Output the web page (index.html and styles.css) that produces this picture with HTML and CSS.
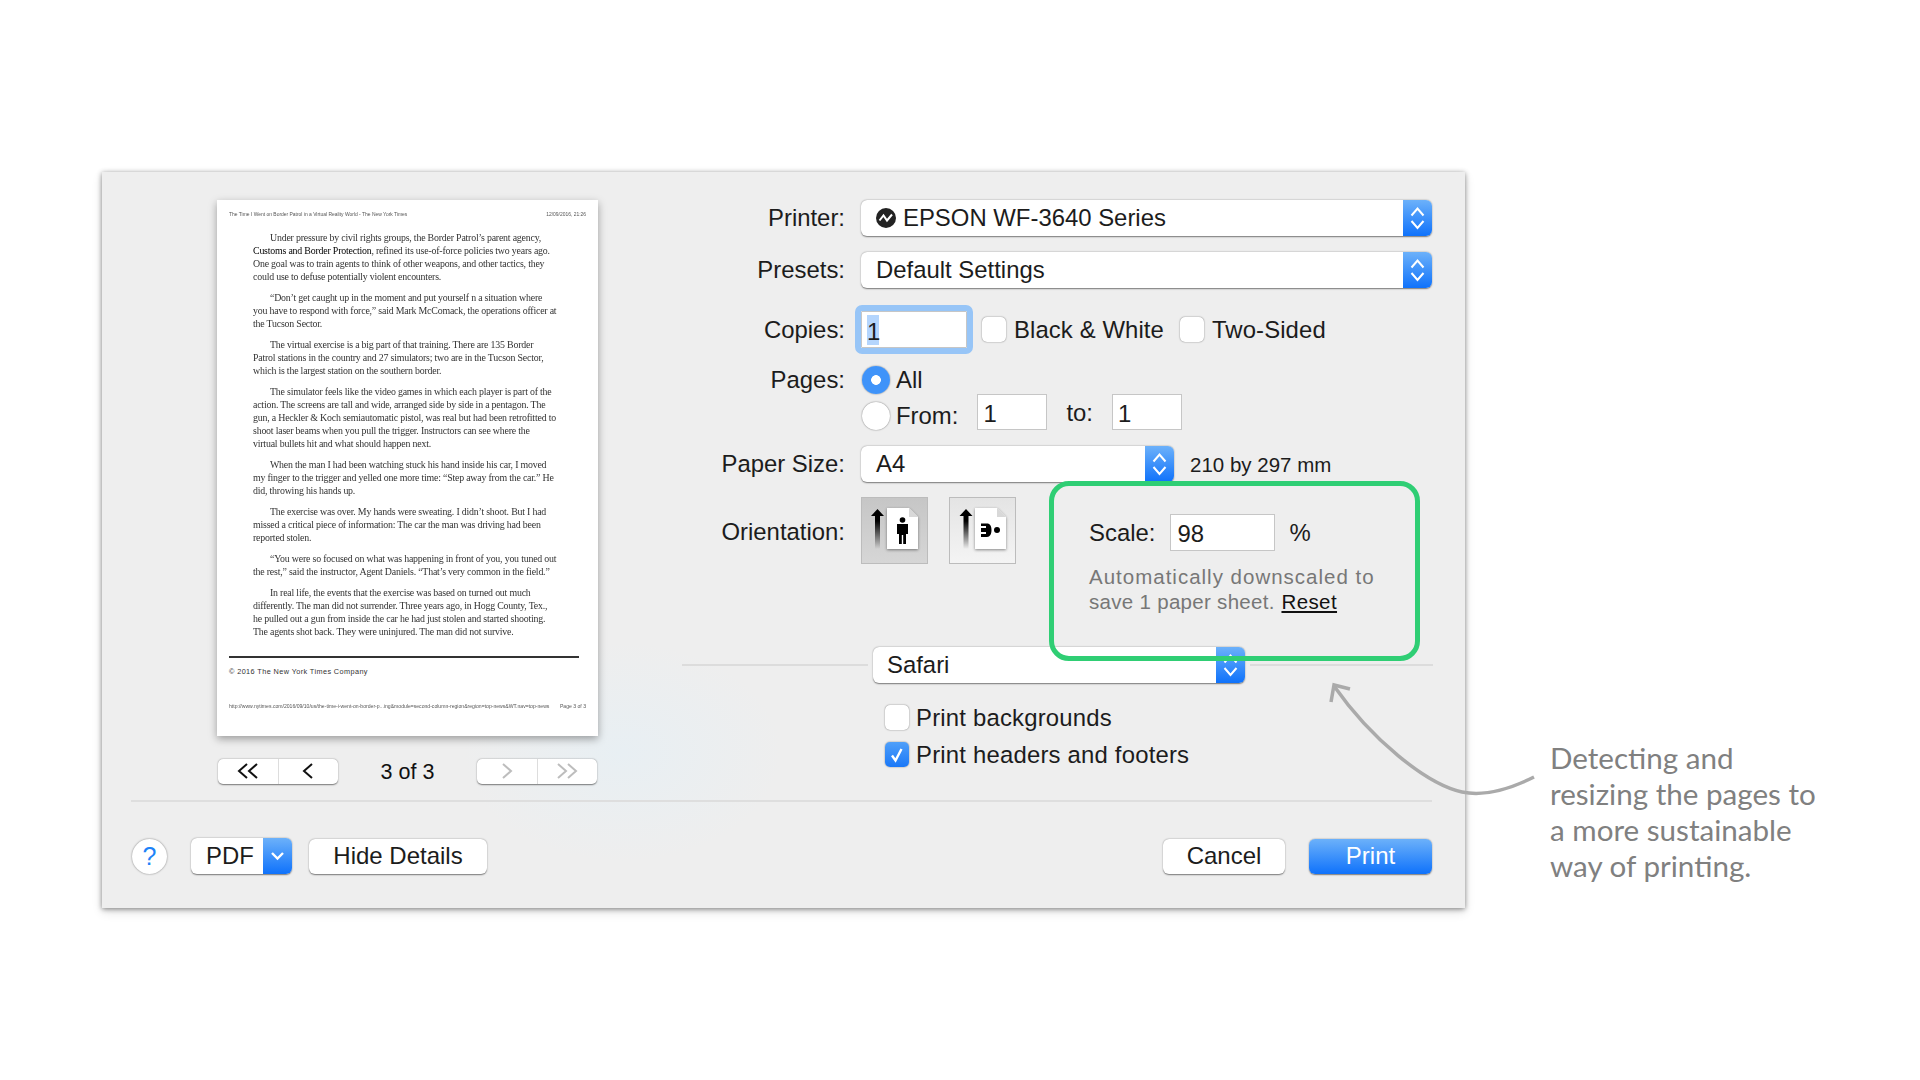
FILE: index.html
```html
<!DOCTYPE html>
<html lang="en">
<head>
  <meta charset="UTF-8" />
  <title>Print dialog</title>
  <link rel="stylesheet" href="styles.css">
</head>
<body>
  <svg width="0" height="0" class="defs">
    <defs>
      <linearGradient id="fade" x1="0" y1="0" x2="0" y2="1">
        <stop offset="0.3" stop-color="#000"/>
        <stop offset="1" stop-color="#000" stop-opacity="0"/>
      </linearGradient>
      <symbol id="updown" viewBox="0 0 29 36">
        <path d="M8.500 15.500l6-7 6 7M8.500 21l6 7 6-7" fill="none" stroke="#fff" stroke-width="2"/>
      </symbol>
    </defs>
  </svg>

  <div class="stage">
    <div class="dialog">
      <div class="main">

        <div class="preview">
          <div class="paper">
            <div class="paper-head">
              <span>The Time I Went on Border Patrol in a Virtual Reality World - The New York Times</span>
              <span>12/09/2016, 21:26</span>
            </div>
            <div class="article">
              <p>Under pressure by civil rights groups, the Border Patrol’s parent agency,<br><b>Customs and Border Protection</b>, refined its use-of-force policies two years ago.<br>One goal was to train agents to think of other weapons, and other tactics, they<br>could use to defuse potentially violent encounters.</p>
              <p>“Don’t get caught up in the moment and put yourself n a situation where<br>you have to respond with force,” said Mark McComack, the operations officer at<br>the Tucson Sector.</p>
              <p>The virtual exercise is a big part of that training. There are 135 Border<br>Patrol stations in the country and 27 simulators; two are in the Tucson Sector,<br>which is the largest station on the southern border.</p>
              <p>The simulator feels like the video games in which each player is part of the<br>action. The screens are tall and wide, arranged side by side in a pentagon. The<br>gun, a Heckler &amp; Koch semiautomatic pistol, was real but had been retrofitted to<br>shoot laser beams when you pull the trigger. Instructors can see where the<br>virtual bullets hit and what should happen next.</p>
              <p>When the man I had been watching stuck his hand inside his car, I moved<br>my finger to the trigger and yelled one more time: “Step away from the car.” He<br>did, throwing his hands up.</p>
              <p>The exercise was over. My hands were sweating. I didn’t shoot. But I had<br>missed a critical piece of information: The car the man was driving had been<br>reported stolen.</p>
              <p>“You were so focused on what was happening in front of you, you tuned out<br>the rest,” said the instructor, Agent Daniels. “That’s very common in the field.”</p>
              <p>In real life, the events that the exercise was based on turned out much<br>differently. The man did not surrender. Three years ago, in Hogg County, Tex.,<br>he pulled out a gun from inside the car he had just stolen and started shooting.<br>The agents shot back. They were uninjured. The man did not survive.</p>
            </div>
            <div class="paper-rule"></div>
            <div class="paper-copy">© 2016 The New York Times Company</div>
            <div class="paper-foot">
              <span>http://www.nytimes.com/2016/09/10/us/the-time-i-went-on-border-p...ing&amp;module=second-column-region&amp;region=top-news&amp;WT.nav=top-news</span>
              <span>Page 3 of 3</span>
            </div>
          </div>

          <div class="pager">
            <div class="seg">
              <span class="seg-btn">
                <svg width="24" height="18" viewBox="0 0 24 18"><path d="M11 2L3 9l8 7M21 2l-8 7 8 7" fill="none" stroke="#111" stroke-width="2"/></svg>
              </span>
              <span class="seg-btn">
                <svg width="12" height="18" viewBox="0 0 12 18"><path d="M10 2L2 9l8 7" fill="none" stroke="#111" stroke-width="2"/></svg>
              </span>
            </div>
            <div class="page-count">3 of 3</div>
            <div class="seg">
              <span class="seg-btn">
                <svg width="12" height="18" viewBox="0 0 12 18"><path d="M2 2l8 7-8 7" fill="none" stroke="#bdbdbd" stroke-width="2"/></svg>
              </span>
              <span class="seg-btn">
                <svg width="24" height="18" viewBox="0 0 24 18"><path d="M3 2l8 7-8 7M13 2l8 7-8 7" fill="none" stroke="#bdbdbd" stroke-width="2"/></svg>
              </span>
            </div>
          </div>
        </div>

        <div class="form">
          <div class="row row-printer">
            <label class="row-label">Printer:</label>
            <div class="popup popup-wide">
              <span class="popup-text">
                <svg class="printer-icon" width="20" height="20" viewBox="0 0 20 20"><circle cx="10" cy="10" r="10" fill="#222"/><path d="M3.500 12.500l4-5 3.500 5 5-6" fill="none" stroke="#fff" stroke-width="2"/></svg>
                EPSON WF-3640 Series
              </span>
              <span class="popup-arrow"><svg width="29" height="36"><use href="#updown"/></svg></span>
            </div>
          </div>

          <div class="row row-presets">
            <label class="row-label">Presets:</label>
            <div class="popup popup-wide">
              <span class="popup-text">Default Settings</span>
              <span class="popup-arrow"><svg width="29" height="36"><use href="#updown"/></svg></span>
            </div>
          </div>

          <div class="row row-copies">
            <label class="row-label">Copies:</label>
            <div class="field field-copies"><span class="selected">1</span></div>
            <span class="check check-bw"></span><span class="check-text">Black &amp; White</span>
            <span class="check check-two"></span><span class="check-text">Two-Sided</span>
          </div>

          <div class="row row-pages">
            <label class="row-label">Pages:</label>
            <span class="radio radio-on"></span><span class="radio-text">All</span>
          </div>
          <div class="row row-from">
            <span class="row-label"></span>
            <span class="radio"></span><span class="radio-text from-text">From:</span>
            <div class="field field-page">1</div>
            <span class="to-text">to:</span>
            <div class="field field-page">1</div>
          </div>

          <div class="row row-paper">
            <label class="row-label">Paper Size:</label>
            <div class="popup popup-paper">
              <span class="popup-text">A4</span>
              <span class="popup-arrow"><svg width="29" height="36"><use href="#updown"/></svg></span>
            </div>
            <span class="paper-dim">210 by 297 mm</span>
          </div>

          <div class="row row-orient">
            <label class="row-label orient-label">Orientation:</label>
            <span class="orient orient-on">
              <svg width="67" height="67" viewBox="0 0 67 67">
                <path d="M16.500 12l6.500 7h-4v33h-5V19h-4z" fill="url(#fade)"/>
                <path class="sheet" d="M26 11h22l9 9v32H26z" fill="#fff"/>
                <path d="M48 11v9h9z" fill="#d8d8d8"/>
                <circle cx="41.500" cy="23" r="2.800"/>
                <path d="M36 27h11v10h-2v10h-2.800v-9h-1.400v9H38V37h-2z"/>
              </svg>
            </span>
            <span class="orient">
              <svg width="67" height="67" viewBox="0 0 67 67">
                <path d="M17 12l6.500 7h-4v33h-5V19h-4z" fill="url(#fade)"/>
                <path class="sheet" d="M26 11h22l9 9v32H26z" fill="#fff"/>
                <path d="M48 11v9h9z" fill="#d8d8d8"/>
                <circle cx="48" cy="33" r="3"/>
                <path d="M32 26.500h6c3 0 4.500 2.500 4.500 6.500s-1.500 7-4.500 7h-6v-3h5v-2h-5v-4h5v-2h-5z"/>
              </svg>
            </span>
          </div>

          <div class="section-line">
            <div class="popup popup-app">
              <span class="popup-text">Safari</span>
              <span class="popup-arrow"><svg width="29" height="36"><use href="#updown"/></svg></span>
            </div>
          </div>

          <div class="option option-first">
            <span class="check"></span><span class="check-text">Print backgrounds</span>
          </div>
          <div class="option">
            <span class="check check-on">
              <svg width="24" height="25" viewBox="0 0 24 25"><path d="M7 13.500l3.500 5L16.500 7" fill="none" stroke="#fff" stroke-width="2.400"/></svg>
            </span>
            <span class="check-text">Print headers and footers</span>
          </div>
        </div>
      </div>

      <div class="foot-rule"></div>

      <div class="foot">
        <span class="help">?</span>
        <div class="popup popup-pdf">
          <span class="popup-text">PDF</span>
          <span class="popup-arrow">
            <svg width="29" height="36" viewBox="0 0 29 36"><path d="M9 15l5.500 5.500L20 15" fill="none" stroke="#fff" stroke-width="2.400"/></svg>
          </span>
        </div>
        <button class="btn btn-details">Hide Details</button>
        <span class="foot-space"></span>
        <button class="btn btn-cancel">Cancel</button>
        <button class="btn btn-print">Print</button>
      </div>

      <!-- highlight sits over the form -->
      <div class="scale-box">
        <div class="scale-row">
          <span>Scale:</span>
          <div class="field field-scale">98</div>
          <span class="percent">%</span>
        </div>
        <p class="scale-note">Automatically downscaled to<br><span class="tight">save 1 paper sheet.</span> <a class="reset">Reset</a></p>
      </div>

      <svg class="callout-arrow" width="220" height="120" viewBox="0 0 220 120">
        <path d="M218 93C190 107 165 112 146 108C110 100 55 55 18 2" fill="none" stroke="#aaa" stroke-width="3.500"/>
        <path d="M34 5L18 1l-3 17" fill="none" stroke="#aaa" stroke-width="3.500"/>
      </svg>
    </div>

    <p class="note">Detecting and<br>resizing the pages to<br>a more sustainable<br>way of printing.</p>
  </div>
</body>
</html>
```

FILE: styles.css
```css
* {
  box-sizing: border-box;
  margin: 0;
  padding: 0;
}

html, body {
  height: 100%;
  background: #fff;
  overflow: hidden;
}

body {
  font-family: 'Liberation Sans', Arial, sans-serif;
  font-size: 23.9px;
  color: #1c1c1c;
}

.defs {
  display: block;
  height: 0;
}

.stage {
  display: flex;
  align-items: flex-start;
  padding: 172px 0 0 102px;
}

.dialog {
  position: relative;
  width: 1363px;
  height: 736px;
  padding-top: 28px;
  background: radial-gradient(ellipse 160px 110px at 520px 580px, #e8eff3, rgba(238,238,238,0) 100%), #eeeeee;
  box-shadow: 0 1px 5px rgba(0,0,0,0.45), 0 4px 10px rgba(0,0,0,0.12);
  flex: none;
}

.main {
  display: flex;
  height: 600px;
  padding-left: 115px;
}

/* preview column */
.preview {
  width: 381px;
  flex: none;
}

.paper {
  height: 536px;
  padding: 11px 12px 0;
  background: #fff;
  color: #333;
  box-shadow: 0 3px 8px rgba(0,0,0,0.35);
}

.paper-head, .paper-foot {
  display: flex;
  justify-content: space-between;
  font-size: 4.950px;
  line-height: 8px;
  color: #555;
  filter: blur(0.3px);
  white-space: nowrap;
}

.article {
  margin-top: 12px;
  padding-left: 24px;
  font-family: 'Liberation Serif', serif;
  font-size: 9.900px;
  letter-spacing: -0.2px;
  line-height: 13px;
  color: #333;
  white-space: nowrap;
  filter: blur(0.25px);
}

.article p {
  margin-bottom: 8px;
  text-indent: 17px;
}

.article b {
  font-weight: 400;
  color: #000;
}

.paper-rule {
  width: 350px;
  height: 1.500px;
  margin-top: 18px;
  background: #333;
}

.paper-copy {
  margin-top: 9px;
  font-size: 7.300px;
  letter-spacing: 0.400px;
  line-height: 10px;
  color: #333;
}

.paper-foot {
  margin-top: 25px;
  font-size: 5.100px;
}

.pager {
  display: flex;
  align-items: center;
  justify-content: space-between;
  margin-top: 21px;
  padding: 0 1px;
}

.seg {
  display: flex;
  width: 120px;
  height: 25px;
  background: #fff;
  border-radius: 5px;
  box-shadow: 0 0.5px 1.5px rgba(0,0,0,0.5);
}

.seg-btn {
  flex: 1;
  display: flex;
  align-items: center;
  justify-content: center;
}

.seg-btn + .seg-btn {
  border-left: 1px solid #ddd;
}

.page-count {
  margin-top: 3px;
  font-size: 21.500px;
  color: #111;
  width: 138px;
  text-align: center;
}

/* form column */
.form {
  width: 750px;
  margin-left: 84px;
  flex: none;
}

.row {
  display: flex;
  align-items: center;
}

.row-label {
  width: 163px;
  margin-right: 16px;
  text-align: right;
  flex: none;
}

.orient-label { margin-top: 3px; }

.row-printer, .row-presets { height: 36px; }
.row-presets { margin-top: 16px; }
.row-copies { height: 37px; margin-top: 23px; }
.row-pages { height: 28px; margin-top: 18px; }
.row-from { height: 36px; }
.row-paper { height: 36px; margin-top: 16px; }
.row-orient { height: 67px; margin-top: 15px; }

.popup {
  display: flex;
  height: 36px;
  background: #fff;
  border-radius: 6px;
  box-shadow: 0 0.5px 1.5px rgba(0,0,0,0.5);
  overflow: hidden;
  flex: none;
}

.popup-text {
  flex: 1;
  display: flex;
  align-items: center;
  padding-left: 15px;
  white-space: nowrap;
}

.popup-arrow {
  width: 29px;
  height: 36px;
  flex: none;
  background: linear-gradient(#6cb1fa, #0f72fb);
}

.popup-arrow svg {
  display: block;
}

.popup-wide { width: 571px; }
.popup-paper { width: 313px; }
.popup-app { width: 372px; }
.popup-app .popup-text { padding-left: 14px; }
.popup-pdf { width: 101px; height: 36px; margin-left: 24px; }
.popup-pdf .popup-text { padding-left: 15px; }

.printer-icon {
  margin-right: 7px;
}

.field {
  background: #fff;
  border: 1px solid #c6c6c6;
  line-height: 37px;
  flex: none;
}

.field-copies {
  width: 106px;
  height: 37px;
  padding-left: 5px;
  outline: 6px solid #97c5f7;
  border-radius: 1px;
  box-shadow: 0 0 0 1px #fff;
}

.selected {
  display: inline-block;
  width: 12px;
  height: 30px;
  margin-top: 3px;
  line-height: 33px;
  background: #b4d5fd;
  vertical-align: top;
}

.field-page {
  width: 70px;
  height: 36px;
  padding-left: 5px;
}

.check {
  display: block;
  width: 24px;
  height: 25px;
  background: #fff;
  border-radius: 5px;
  box-shadow: 0 0 1.5px rgba(0,0,0,0.6);
  flex: none;
}

.check-bw { margin-left: 15px; }
.check-two { margin-left: 16px; }

.check-text {
  margin-left: 8px;
  letter-spacing: 0.1px;
  white-space: nowrap;
}

.option .check-text { letter-spacing: 0.2px; margin-left: 7px; }

.check-on {
  background: linear-gradient(#4f9ff9, #1a78f8);
}

.check-on svg { display: block; }

.radio {
  display: block;
  width: 28px;
  height: 28px;
  background: #fff;
  border-radius: 50%;
  box-shadow: 0 0 1.5px rgba(0,0,0,0.6);
  flex: none;
  margin-left: 1px;
}

.radio-on {
  background: radial-gradient(circle, #fff 0, #fff 4.500px, #3f93f9 5.200px);
}

.radio-text { margin-left: 6px; }

.from-text {
  margin-right: 19px;
}

.row-from .radio { margin-top: 8px; }
.row-from .from-text { margin-top: 8px; }

.to-text {
  margin: 2px 19px 0;
}

.paper-dim {
  margin: 2px 0 0 16px;
  font-size: 20.500px;
  white-space: nowrap;
}

.orient {
  display: block;
  width: 67px;
  height: 67px;
  border: 1px solid #bcbcbc;
  background: linear-gradient(#e4e4e4, #f4f4f4);
  flex: none;
}

.orient svg {
  display: block;
  margin: -1px;
}

.sheet {
  filter: drop-shadow(0 1px 1.5px rgba(0,0,0,0.45));
}

.orient-on {
  background: linear-gradient(#c6c6c6, #d6d6d6);
}

.orient + .orient { margin-left: 21px; }

.section-line {
  display: flex;
  align-items: center;
  height: 35px;
  margin-top: 83px;
  padding-left: 191px;
  position: relative;
}

.section-line::before, .section-line::after {
  content: "";
  height: 2px;
  background: #dcdcdc;
  flex: none;
}

.section-line::before {
  width: 186px;
  margin-left: -191px;
  margin-right: 5px;
}

.section-line::after {
  width: 183px;
  margin-left: 5px;
}

.option {
  display: flex;
  align-items: center;
  height: 25px;
  margin-top: 12px;
  padding-left: 203px;
}

.option-first { margin-top: 23px; }

/* bottom bar */
.foot-rule {
  height: 2px;
  margin-left: 29px;
  width: 1301px;
  background: #dedede;
}

.foot {
  display: flex;
  align-items: center;
  height: 36px;
  margin-top: 36px;
  padding-left: 30px;
  width: 1330px;
}

.help {
  width: 35px;
  height: 35px;
  border-radius: 50%;
  background: #fff;
  box-shadow: 0 0 2px rgba(0,0,0,0.5);
  color: #1e83f8;
  font-size: 25px;
  line-height: 35px;
  text-align: center;
  flex: none;
}

.btn {
  height: 35px;
  border: none;
  border-radius: 6px;
  background: #fff;
  box-shadow: 0 0.5px 1.5px rgba(0,0,0,0.5);
  font-family: inherit;
  font-size: 24px;
  color: #1c1c1c;
  flex: none;
}

.btn-details { width: 178px; margin-left: 17px; }
.foot-space { flex: 1; }
.btn-cancel { width: 122px; }

.btn-print {
  width: 123px;
  margin-left: 24px;
  background: linear-gradient(#6cb1fa, #0f72fb);
  color: #fff;
}

/* overlays */
.scale-box {
  position: absolute;
  left: 947px;
  top: 309px;
  width: 371px;
  height: 180px;
  padding: 28px 35px 0;
  border: 5px solid #2fce74;
  border-radius: 20px;
}

.scale-row {
  display: flex;
  align-items: center;
  height: 37px;
}

.field-scale {
  width: 105px;
  height: 37px;
  margin-left: 15px;
  padding-left: 6px;
  line-height: 38px;
}

.percent { margin-left: 14px; }

.scale-note {
  margin-top: 13px;
  font-size: 20.500px;
  line-height: 25px;
  letter-spacing: 1px;
  color: #777;
  white-space: nowrap;
}

.tight { letter-spacing: 0.3px; }

.reset {
  color: #111;
  text-decoration: underline;
  letter-spacing: 0.4px;
}

.callout-arrow {
  position: absolute;
  left: 1214px;
  top: 512px;
  overflow: visible;
}

.note {
  flex: none;
  margin: 568px 0 0 85px;
  font-family: Lato, sans-serif;
  font-size: 29.600px;
  line-height: 36px;
  color: #808080;
  white-space: nowrap;
}
```
